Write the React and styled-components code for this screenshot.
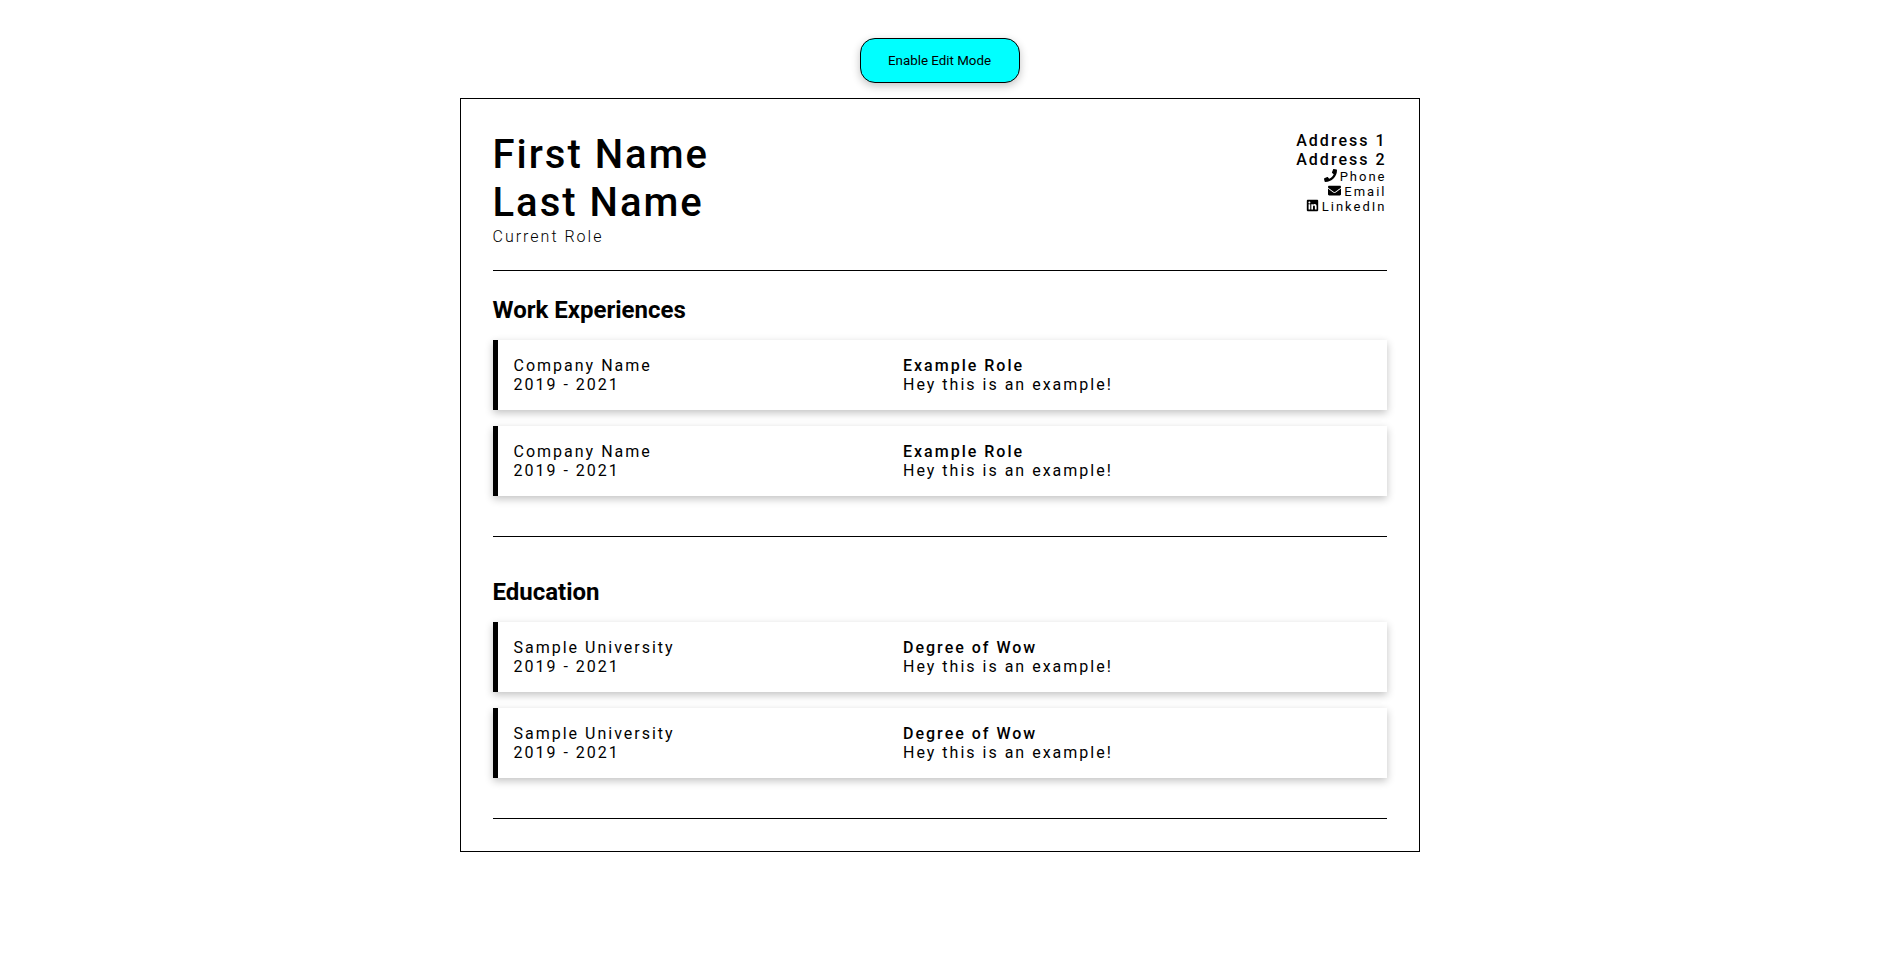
import React, { useState } from "react";
import styled, { createGlobalStyle } from "styled-components";
import { FaPhone, FaEnvelope, FaLinkedin } from "react-icons/fa";

const GlobalStyle = createGlobalStyle`
  *, *::before, *::after {
    box-sizing: border-box;
  }

  body {
    margin: 0;
    background: #fff;
    color: #000;
    font-family: Roboto, "Liberation Sans", sans-serif;
    font-size: 16px;
    line-height: 19px;
  }

  h1, h2, h3, p {
    margin: 0;
  }
`;

const Page = styled.main`
  display: flex;
  flex-direction: column;
  align-items: center;
  gap: 15px;
  padding: 38px 16px;
`;

const EditButton = styled.button`
  min-width: 160px;
  padding: 14px 24px;
  border: 1px solid #000;
  border-radius: 15px;
  background: #00ffff;
  color: #000;
  font-family: inherit;
  font-size: smaller;
  line-height: 15px;
  box-shadow: 0 3px 8px rgba(0, 0, 0, 0.24);
  cursor: pointer;
`;

const Resume = styled.article`
  width: 100%;
  max-width: 960px;
  padding: 32px;
  border: 1px solid #000;
`;

const Header = styled.header`
  display: flex;
  justify-content: space-between;
  padding-bottom: 24px;
  border-bottom: 1px solid #000;
  letter-spacing: 2px;
`;

const Name = styled.h1`
  font-size: 40px;
  font-weight: 500;
  line-height: 48px;
`;

const Role = styled.p`
  font-weight: 300;
`;

const Contact = styled.address`
  display: flex;
  flex-direction: column;
  align-items: flex-end;
  font-style: normal;
`;

const AddressLine = styled.p`
  font-weight: 500;
`;

const ContactItem = styled.p`
  display: flex;
  align-items: flex-start;
  gap: 3px;
  font-size: 13px;
  line-height: 15px;
`;

const Section = styled.section`
  padding: ${({ $top }) => $top}px 0 40px;
  border-bottom: 1px solid #000;
`;

const SectionTitle = styled.h2`
  margin-bottom: 16px;
  font-size: 24px;
  font-weight: 700;
  line-height: 28px;
`;

const Entries = styled.div`
  display: flex;
  flex-direction: column;
  gap: 16px;
`;

const Entry = styled.div`
  display: grid;
  grid-template-columns: 5fr 6fr;
  padding: 16px;
  border-left: 5px solid #000;
  box-shadow: 0 3px 8px rgba(0, 0, 0, 0.24);
  letter-spacing: 2px;
`;

const EntryTitle = styled.h3`
  font-size: 16px;
  font-weight: 500;
`;

const jobs = [1, 2].map((id) => ({
  id,
  place: "Company Name",
  years: "2019 - 2021",
  title: "Example Role",
  text: "Hey this is an example!",
}));

const schools = [1, 2].map((id) => ({
  id,
  place: "Sample University",
  years: "2019 - 2021",
  title: "Degree of Wow",
  text: "Hey this is an example!",
}));

function ResumeSection({ title, items, top }) {
  return (
    <Section $top={top}>
      <SectionTitle>{title}</SectionTitle>
      <Entries>
        {items.map((item) => (
          <Entry key={item.id}>
            <div>
              <p>{item.place}</p>
              <p>{item.years}</p>
            </div>
            <div>
              <EntryTitle>{item.title}</EntryTitle>
              <p>{item.text}</p>
            </div>
          </Entry>
        ))}
      </Entries>
    </Section>
  );
}

export default function App() {
  const [editing, setEditing] = useState(false);
  return (
    <>
      <GlobalStyle />
      <Page>
        <EditButton type="button" onClick={() => setEditing(!editing)}>
          {editing ? "Disable Edit Mode" : "Enable Edit Mode"}
        </EditButton>
        <Resume contentEditable={editing} suppressContentEditableWarning>
          <Header>
            <div>
              <Name>
                First Name
                <br />
                Last Name
              </Name>
              <Role>Current Role</Role>
            </div>
            <Contact>
              <AddressLine>Address 1</AddressLine>
              <AddressLine>Address 2</AddressLine>
              <ContactItem>
                <FaPhone aria-hidden="true" />
                Phone
              </ContactItem>
              <ContactItem>
                <FaEnvelope aria-hidden="true" />
                Email
              </ContactItem>
              <ContactItem>
                <FaLinkedin aria-hidden="true" />
                LinkedIn
              </ContactItem>
            </Contact>
          </Header>
          <ResumeSection title="Work Experiences" items={jobs} top={25} />
          <ResumeSection title="Education" items={schools} top={41} />
        </Resume>
      </Page>
    </>
  );
}
